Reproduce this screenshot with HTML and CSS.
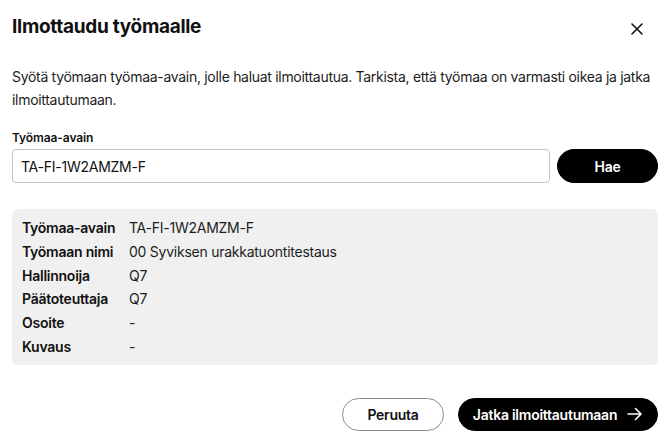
FILE: index.html
```html
<!DOCTYPE html>
<html lang="fi">

<head>
    <meta charset="UTF-8">
    <meta name="viewport" content="width=device-width, initial-scale=1.0">
    <title>Ilmottaudu työmaalle</title>
    <link rel="stylesheet" href="styles.css">
</head>

<body>
    <div class="dialog">
        <div class="dialog-header">
            <h1 class="dialog-title">Ilmottaudu työmaalle</h1>
            <button class="close-btn" aria-label="Sulje">
                <svg width="12" height="12" viewBox="0 0 12 12">
                    <path d="M1 1 L11 11 M11 1 L1 11" stroke="#111" stroke-width="1.6" stroke-linecap="round" />
                </svg>
            </button>
        </div>

        <p class="intro">Syötä työmaan työmaa-avain, jolle haluat ilmoittautua. Tarkista, että työmaa on varmasti oikea ja jatka ilmoittautumaan.</p>

        <label class="field-label" for="key">Työmaa-avain</label>
        <div class="search-row">
            <input id="key" class="key-input" type="text" value="TA-FI-1W2AMZM-F">
            <button class="btn btn-dark search-btn">Hae</button>
        </div>

        <div class="site-info">
            <div class="info-label">Työmaa-avain</div>
            <div class="info-value">TA-FI-1W2AMZM-F</div>
            <div class="info-label">Työmaan nimi</div>
            <div class="info-value">00 Syviksen urakkatuontitestaus</div>
            <div class="info-label">Hallinnoija</div>
            <div class="info-value">Q7</div>
            <div class="info-label">Päätoteuttaja</div>
            <div class="info-value">Q7</div>
            <div class="info-label">Osoite</div>
            <div class="info-value">-</div>
            <div class="info-label">Kuvaus</div>
            <div class="info-value">-</div>
        </div>

        <div class="dialog-footer">
            <button class="btn btn-light">Peruuta</button>
            <button class="btn btn-dark next-btn">
                Jatka ilmoittautumaan
                <svg width="16" height="14" viewBox="0 0 16 14">
                    <path d="M1 7 H14 M8.5 1.5 L14 7 L8.5 12.5" fill="none" stroke="#fff" stroke-width="1.6" stroke-linecap="round" stroke-linejoin="round" />
                </svg>
            </button>
        </div>
    </div>
</body>

</html>
```

FILE: styles.css
```css
* {
    box-sizing: border-box;
}

body {
    margin: 0;
    background: #fff;
    color: #111;
    font-family: Inter, "Liberation Sans", sans-serif;
    letter-spacing: -0.25px;
}

.dialog {
    width: 670px;
    padding: 14px 12px 0 12px;
}

.dialog-header {
    display: flex;
    justify-content: space-between;
    align-items: center;
}

.dialog-title {
    margin: 0;
    font-size: 19px;
    font-weight: 700;
    line-height: 26px;
    letter-spacing: -0.3px;
}

.close-btn {
    border: none;
    background: none;
    padding: 0;
    margin-right: 15px;
    margin-top: 3px;
    width: 12px;
    height: 12px;
    display: flex;
}

.intro {
    margin: 25px 0 0 0;
    font-size: 14px;
    line-height: 23px;
    color: #1c1c1c;
    letter-spacing: -0.3px;
}

.field-label {
    display: block;
    margin-top: 19px;
    font-size: 12px;
    font-weight: 600;
    line-height: 16px;
    letter-spacing: -0.1px;
}

.search-row {
    display: flex;
    gap: 7px;
    margin-top: 3px;
}

.key-input {
    flex: 1;
    height: 34px;
    border: 1px solid #c4c4c4;
    border-radius: 4px;
    padding: 0 8px;
    font-family: inherit;
    font-size: 14px;
    letter-spacing: -0.25px;
    color: #111;
}

.btn {
    font-family: inherit;
    font-size: 14px;
    font-weight: 600;
    letter-spacing: -0.25px;
    border-radius: 999px;
    cursor: pointer;
}

.btn-dark {
    background: #000;
    color: #fff;
    border: 1px solid #000;
}

.btn-light {
    background: #fff;
    color: #111;
    border: 1px solid #8a8a8a;
}

.search-btn {
    width: 101px;
    height: 34px;
}

.site-info {
    margin-top: 26px;
    background: #f0f0f0;
    border-radius: 6px;
    padding: 7px 10px 6px 10px;
    display: grid;
    grid-template-columns: 107px 1fr;
    font-size: 14px;
    line-height: 23.8px;
}

.info-label {
    font-weight: 600;
}

.info-value {
    color: #1c1c1c;
}

.dialog-footer {
    display: flex;
    justify-content: flex-end;
    gap: 14px;
    margin-top: 33px;
}

.dialog-footer .btn {
    height: 33px;
}

.btn-light {
    width: 102px;
}

.next-btn {
    width: 200px;
    display: flex;
    align-items: center;
    justify-content: center;
    gap: 10px;
}
```
